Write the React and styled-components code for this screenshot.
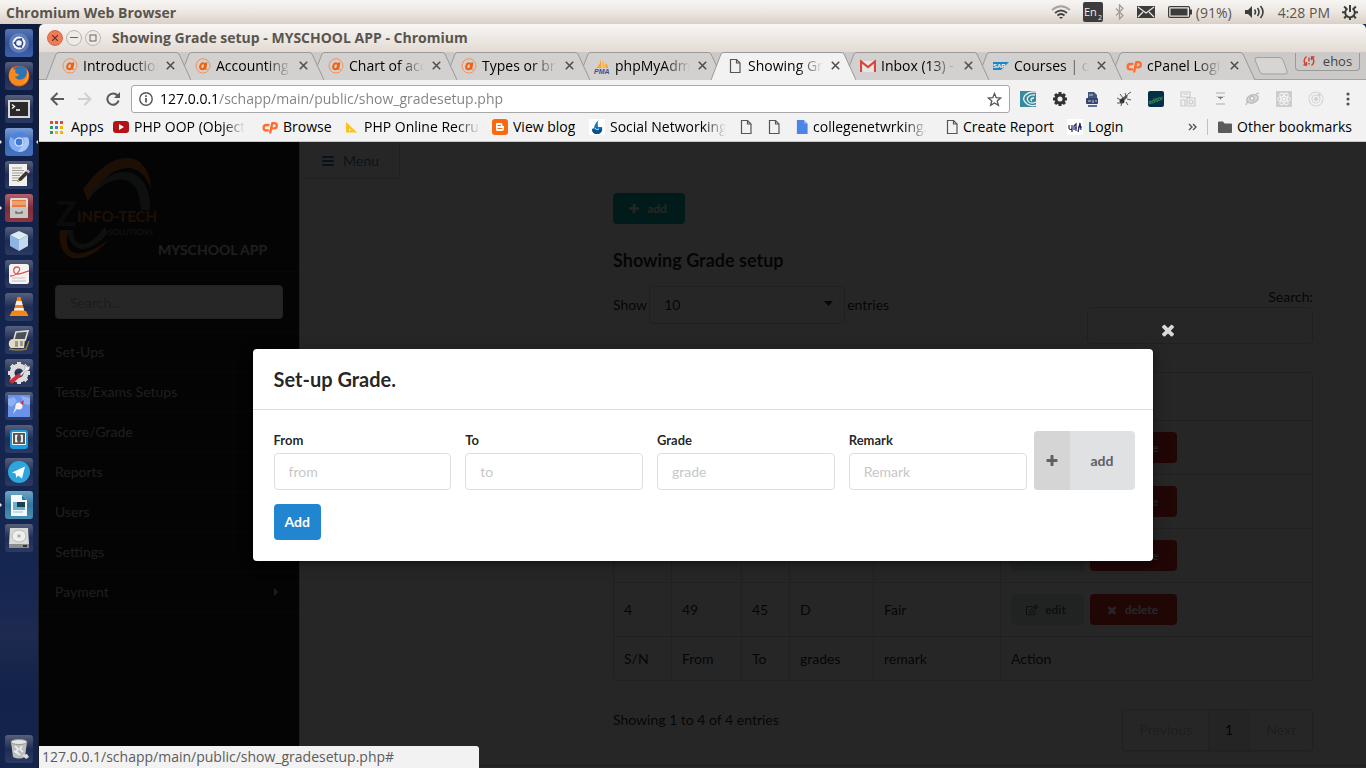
import React from "react";
import styled, { createGlobalStyle, css } from "styled-components";
import { FaRegEdit } from "react-icons/fa";

const UI = `"Open Sans", "Noto Sans", sans-serif`;
const PAGE = `Lato, "Liberation Sans", sans-serif`;

const GlobalStyle = createGlobalStyle`
  *, *::before, *::after { box-sizing: border-box; }
  body { margin: 0; font-family: ${UI}; font-size: 14px; background: #14234a; }
  button, input, select { font: inherit; color: inherit; margin: 0; }
  button { border: 0; padding: 0; background: none; cursor: pointer; }
  a { color: inherit; text-decoration: none; }
  svg { display: block; flex: none; }
`;

/* ---------- desktop shell ---------- */

const Desktop = styled.div`
  display: flex;
  flex-direction: column;
  min-height: 100vh;
`;

const Panel = styled.header`
  display: flex;
  align-items: center;
  justify-content: space-between;
  height: 24px;
  padding: 0 8px 0 6px;
  color: #5a554e;
  background: linear-gradient(#f7f5f3, #ece7e2 50%, #d9cfc6);
`;

const PanelTitle = styled.span`
  font-weight: 700;
`;

const Indicators = styled.div`
  display: flex;
  align-items: center;
  gap: 12px;
`;

const Indicator = styled.button`
  display: flex;
  align-items: center;
  gap: 3px;
`;

const Workspace = styled.div`
  display: flex;
  flex: 1;
`;

const Launcher = styled.nav`
  display: flex;
  flex-direction: column;
  gap: 5px;
  width: 39px;
  flex: none;
  padding: 5px 0;
  background: linear-gradient(#0d1b40, #13234c 30%, #152650 75%, #1e2a50 82%, #12224a 90%, #14244c);
  border-right: 1px solid #1a1c26;
`;

const tileTint = {
  plain: "linear-gradient(#56607c, #1f2d55 50%, #2b3a62)",
  blue: "linear-gradient(#5577b5, #2f4f96 50%, #3f62a8)",
  sky: "linear-gradient(#7b9cd6, #3c68b4 50%, #4472bf)",
  red: "linear-gradient(#b4606c, #7e2c3a 50%, #8c3644)",
  teal: "linear-gradient(#6fa6c4, #33779f 50%, #4a8fb2)",
};

const Tile = styled.button`
  position: relative;
  width: 28px;
  height: 28px;
  margin-left: 5px;
  margin-top: ${(p) => (p.$last ? "auto" : "0")};
  border-radius: 3px;
  background: ${(p) => tileTint[p.$tint || "plain"]};
  ${(p) =>
    p.$running &&
    css`
      &::before {
        content: "";
        position: absolute;
        left: -5px;
        top: 12px;
        border: 2px solid transparent;
        border-left-color: #e8e8ee;
      }
    `}
  ${(p) =>
    p.$focused &&
    css`
      &::after {
        content: "";
        position: absolute;
        right: -5px;
        top: 12px;
        border: 2px solid transparent;
        border-right-color: #e8e8ee;
      }
    `}
`;

const Window = styled.section`
  display: flex;
  flex-direction: column;
  flex: 1;
  min-width: 0;
`;

const TitleBar = styled.div`
  display: flex;
  align-items: center;
  gap: 3px;
  height: 28px;
  padding: 0 8px;
  border-radius: 5px 5px 0 0;
  background: linear-gradient(#f8f6f4, #e3dbd4);
  color: #5a554e;
`;

const WindowButton = styled.button`
  display: grid;
  place-items: center;
  width: 16px;
  height: 16px;
  border-radius: 50%;
  border: 1px solid ${(p) => (p.$close ? "#d8694a" : "#bdb5ad")};
  background: ${(p) => (p.$close ? "#ee7a58" : "#eeeae6")};
`;

const WindowTitle = styled.h1`
  margin: 0 0 0 8px;
  font-size: 14px;
  line-height: 20px;
  font-weight: 700;
`;

/* ---------- browser chrome ---------- */

const TabStrip = styled.div`
  display: flex;
  align-items: center;
  height: 28px;
  padding-left: 6px;
  background: #cbcac9;
  border-bottom: 1px solid #a2a2a2;
`;

const TabBox = styled.div`
  position: relative;
  display: flex;
  align-items: center;
  width: 146px;
  height: 28px;
  padding: 0 14px 0 17px;
  margin-right: -13px;
  z-index: ${(p) => p.$level};
`;

const TabShape = styled.svg`
  position: absolute;
  inset: 0;
  z-index: -1;
`;

const TabLink = styled.a`
  display: flex;
  align-items: center;
  gap: 5px;
  flex: 1;
  min-width: 0;
  color: #000;
`;

const Faded = styled.span`
  flex: 1;
  overflow: hidden;
  white-space: nowrap;
  mask-image: linear-gradient(90deg, #000 65%, transparent);
`;

const TabClose = styled.button`
  display: grid;
  place-items: center;
  width: 14px;
  height: 14px;
  margin-left: 5px;
`;

const Profile = styled.button`
  display: flex;
  align-items: center;
  justify-content: center;
  gap: 8px;
  width: 65px;
  height: 18px;
  margin: 0 6px 8px auto;
  border: 1px solid #9a9a9a;
  border-top: 0;
  border-radius: 0 0 4px 4px;
  font-size: 13px;
  color: #444;
`;

const NewTab = styled.button`
  margin-left: 12px;
`;

const Toolbar = styled.div`
  display: flex;
  align-items: center;
  height: 38px;
  padding: 0 10px 0 11px;
  background: #f2f2f2;
`;

const NavButton = styled.button`
  display: grid;
  place-items: center;
  width: 14px;
  height: 16px;
  margin-right: 14px;
`;

const Omnibox = styled.form`
  display: flex;
  align-items: center;
  flex: 1;
  gap: 7px;
  height: 28px;
  margin: 0 10px 0 -3px;
  padding: 0 7px;
  border: 1px solid #a8a8a8;
  border-radius: 3px;
  background: #fff;
`;

const Address = styled.input`
  flex: 1;
  min-width: 0;
  border: 0;
  padding: 0;
  outline: 0;
  line-height: 20px;
  color: transparent;
  background: linear-gradient(90deg, #000 58px, #808080 58px);
  background-clip: text;
  -webkit-background-clip: text;
`;

const Extensions = styled.div`
  display: flex;
  gap: 16px;
`;

const BookmarkBar = styled.nav`
  display: flex;
  align-items: center;
  height: 24px;
  padding: 0 14px 6px 11px;
  background: #f2f2f2;
  border-bottom: 1px solid #c8c8c8;
  color: #000;
`;

const BookmarkLink = styled.a`
  display: flex;
  align-items: center;
  gap: 5px;
  width: ${(p) => (p.$w ? `${p.$w}px` : "auto")};
  white-space: nowrap;
`;

const BookmarkText = styled.span`
  overflow: hidden;
  max-width: 116px;
  ${(p) => p.$fade && "mask-image: linear-gradient(90deg, #000 80%, transparent);"}
`;

const BarEnd = styled.div`
  display: flex;
  align-items: center;
  gap: 10px;
  margin-left: auto;
`;

const Separator = styled.span`
  width: 1px;
  height: 16px;
  background: #c0c0c0;
`;

/* ---------- web page ---------- */

const Viewport = styled.div`
  position: relative;
  display: flex;
  flex: 1;
  background: #fff;
  font-family: ${PAGE};
  line-height: 20px;
  color: rgba(0, 0, 0, 0.87);
`;

const Sidebar = styled.aside`
  width: 260px;
  flex: none;
  background: #1b1c1d;
  color: rgba(255, 255, 255, 0.75);
`;

const Brand = styled.a`
  display: flex;
  align-items: flex-end;
  height: 130px;
  padding: 0 16px 11px 17px;
  font-weight: 700;
  border-bottom: 1px solid #2d2e2f;
`;

const BrandName = styled.span`
  margin-left: 2px;
`;

const SearchItem = styled.div`
  padding: 13px 16px 12px;
  border-bottom: 1px solid #2d2e2f;
`;

const SidebarSearch = styled.input`
  display: block;
  width: 100%;
  height: 34px;
  padding: 0 14px;
  border: 1px solid #e0e0e0;
  border-radius: 4px;
  background: #fff;
  &::placeholder { color: #bbb; }
`;

const SideLink = styled.a`
  display: flex;
  align-items: center;
  justify-content: space-between;
  height: 40px;
  padding: 0 20px 0 16px;
  border-bottom: 1px solid #2d2e2f;
`;

const Main = styled.main`
  flex: 1;
  min-width: 0;
  border-left: 1px solid #d4d4d5;
`;

const MenuButton = styled.button`
  display: flex;
  align-items: center;
  gap: 9px;
  width: 100px;
  height: 37px;
  padding: 2px 0 0 22px;
  border: 1px solid #d4d4d5;
  border-radius: 0 0 4px 4px;
  border-width: 0 1px 1px 0;
  color: #4183c4;
`;

const Content = styled.div`
  max-width: 700px;
  margin: 14px 53px 14px auto;
`;

const SmallButton = styled.button`
  display: inline-flex;
  align-items: center;
  justify-content: center;
  gap: 7px;
  width: ${(p) => p.$w}px;
  height: 31px;
  padding-right: 3px;
  border-radius: 4px;
  font-size: 12px;
  font-weight: 700;
  vertical-align: top;
  color: ${(p) => p.$fg || "#fff"};
  background: ${(p) => p.$bg};
  & + & { margin-left: 6px; }
`;

const Heading = styled.h2`
  margin: 24px 0 14px;
  font-size: 18px;
  line-height: 24px;
  font-weight: 700;
`;

const TableTools = styled.div`
  display: flex;
  justify-content: space-between;
  align-items: flex-start;
  margin-bottom: 28px;
`;

const LengthLabel = styled.label`
  display: flex;
  align-items: center;
  gap: 2px;
`;

const SelectWrap = styled.span`
  position: relative;
  display: block;
`;

const Select = styled.select`
  appearance: none;
  width: 196px;
  height: 38px;
  padding: 0 14px;
  border: 1px solid #d4d4d5;
  border-radius: 4px;
  background: #fff;
`;

const SelectCaret = styled.svg`
  position: absolute;
  right: 12px;
  top: 15px;
`;

const SearchLabel = styled.label`
  display: flex;
  flex-direction: column;
  align-items: flex-end;
  padding-top: 1px;
`;

const TableSearch = styled.input`
  width: 226px;
  height: 37px;
  padding: 0 14px;
  border: 1px solid #d4d4d5;
  border-radius: 4px;
  background: #fff;
`;

const Grid = styled.table`
  width: 100%;
  table-layout: fixed;
  border: 1px solid #d4d4d5;
  border-radius: 4px;
  border-spacing: 0;
  th, td { padding: 0 10px; text-align: left; font-weight: 400; }
  th + th, td + td { border-left: 1px solid #dededf; }
  thead tr { height: 47px; }
  thead th { background: #fafafa; font-weight: 700; }
  tbody tr { height: 54px; }
  tfoot tr { height: 44px; }
  tbody td, tfoot td { border-top: 1px solid #d4d4d5; }
`;

const TableFoot = styled.div`
  display: flex;
  justify-content: space-between;
  align-items: flex-start;
  margin-top: 28px;
`;

const Info = styled.p`
  margin: 1px 0 0;
`;

const Pager = styled.nav`
  display: flex;
  height: 42px;
  border: 1px solid #d4d4d5;
  border-radius: 4px;
  box-shadow: 0 1px 2px rgba(34, 36, 38, 0.15);
`;

const PageLink = styled.a`
  display: flex;
  align-items: center;
  padding: 0 16px;
  background: ${(p) => (p.$current ? "#f2f2f2" : "transparent")};
  color: ${(p) => (p.$current ? "rgba(0,0,0,.95)" : "rgba(40,40,40,.3)")};
  & + & { border-left: 1px solid #dededf; }
`;

const PageEnd = styled.div`
  height: 3px;
  border-top: 1px solid #c4c4c5;
`;

const Dimmer = styled.div`
  position: absolute;
  inset: 0;
  display: flex;
  align-items: center;
  justify-content: center;
  background: rgba(0, 0, 0, 0.85);
`;

const Modal = styled.section`
  position: relative;
  width: 900px;
  max-width: 90%;
  border-radius: 4px;
  background: #fff;
  box-shadow: 1px 3px 3px rgba(0, 0, 0, 0.2), 1px 3px 15px 2px rgba(0, 0, 0, 0.2);
`;

const CloseButton = styled.button`
  position: absolute;
  top: -28px;
  right: -24px;
  color: #d9d9d9;
`;

const ModalTitle = styled.h2`
  margin: 0;
  padding: 18px 21px;
  font-size: 20px;
  line-height: 24px;
  font-weight: 700;
  border-bottom: 1px solid #dededf;
`;

const ModalForm = styled.form`
  padding: 21px 18px 21px 21px;
`;

const FieldRow = styled.div`
  display: flex;
  align-items: stretch;
  gap: 7px;
  margin-bottom: 14px;
`;

const Fields = styled.div`
  display: grid;
  grid-template-columns: repeat(4, 1fr);
  gap: 14px;
  flex: 1;
`;

const Field = styled.label`
  display: block;
  font-size: 13px;
  line-height: 18px;
  font-weight: 700;
`;

const FieldInput = styled.input`
  display: block;
  width: 100%;
  height: 37px;
  margin-top: 4px;
  padding: 0 14px;
  border: 1px solid #dededf;
  border-radius: 4px;
  font-size: 14px;
  font-weight: 400;
  background: #fff;
  &::placeholder { color: #c7c7c7; opacity: 1; }
`;

const LabeledButton = styled.button`
  display: flex;
  width: 101px;
  border-radius: 4px;
  overflow: hidden;
  font-weight: 700;
  color: #5f6062;
  background: #e0e1e2;
`;

const ButtonIcon = styled.span`
  display: grid;
  place-items: center;
  align-self: stretch;
  width: 36px;
  background: #d5d5d5;
`;

const ButtonText = styled.span`
  flex: 1;
  align-self: center;
`;

const PrimaryButton = styled.button`
  display: block;
  height: 36px;
  padding: 0 11px;
  border-radius: 4px;
  font-weight: 700;
  color: #fff;
  background: #2185d0;
`;

const StatusBubble = styled.div`
  position: absolute;
  left: 0;
  bottom: 0;
  width: 440px;
  height: 22px;
  padding-left: 3px;
  border-top-right-radius: 3px;
  font-family: ${UI};
  line-height: 22px;
  color: #5c5c5c;
  background: #f2f2f2;
`;

/* ---------- glyphs ---------- */

const Plus = ({ size = 14 }) => (
  <svg width={size} height={size} viewBox="0 0 1792 1792" fill="currentColor">
    <path d="M1600 736v192q0 40-28 68t-68 28h-416v416q0 40-28 68t-68 28h-192q-40 0-68-28t-28-68v-416h-416q-40 0-68-28t-28-68v-192q0-40 28-68t68-28h416v-416q0-40 28-68t68-28h192q40 0 68 28t28 68v416h416q40 0 68 28t28 68z" />
  </svg>
);

const Times = ({ size = 14 }) => (
  <svg width={size} height={size} viewBox="0 0 1792 1792" fill="currentColor">
    <path d="M1490 1322q0 40-28 68l-136 136q-28 28-68 28t-68-28l-294-294-294 294q-28 28-68 28t-68-28l-136-136q-28-28-28-68t28-68l294-294-294-294q-28-28-28-68t28-68l136-136q28-28 68-28t68 28l294 294 294-294q28-28 68-28t68 28l136 136q28 28 28 68t-28 68l-294 294 294 294q28 28 28 68z" />
  </svg>
);

const Bars = () => (
  <svg width="12" height="12" viewBox="0 0 12 12" fill="currentColor">
    <rect y="1" width="12" height="2" rx="1" />
    <rect y="5" width="12" height="2" rx="1" />
    <rect y="9" width="12" height="2" rx="1" />
  </svg>
);

const CaretRight = () => (
  <svg width="5" height="8" viewBox="0 0 5 8" fill="currentColor"><path d="M0 0l4 4-4 4z" /></svg>
);

const Svg16 = ({ children, w = 16 }) => (
  <svg width={w} height="16" viewBox={`0 0 ${w} 16`}>{children}</svg>
);

const AtIcon = () => (
  <Svg16>
    <path d="M13.6 12.2A7 7.2 0 1 1 15 7.6c0 2.600-1.200 4-2.800 4-1.200 0-1.900-.7-1.700-1.900L11.300 4.600" fill="none" stroke="#f3915a" strokeWidth="1" />
    <ellipse cx="7.600" cy="8.200" rx="2.300" ry="3" transform="rotate(18 7.600 8.200)" fill="none" stroke="#f2600c" strokeWidth="2" />
    <path d="M11.400 4.500l-1.300 7" stroke="#f2600c" strokeWidth="2" />
  </Svg16>
);

const PmaIcon = () => (
  <Svg16>
    <path d="M7 1v9H2.500C4.500 8 6.500 5 7 1z" fill="#f7a331" />
    <path d="M8 2c2 2 3 5 3 8H8z" fill="#f9b95c" />
    <path d="M11.500 5c2 1.500 2.500 3.500 2.500 5h-2.500z" fill="#f7a331" />
    <text x="0" y="16" fontSize="7" fontWeight="700" fontStyle="italic" fontFamily="Liberation Sans, sans-serif" fill="#4b4b80">PMA</text>
  </Svg16>
);

const PageIcon = ({ fill = "none", stroke = "#555", w = 12 }) => (
  <Svg16 w={w}>
    <g transform={`translate(${(w - 12) / 2} 0)`}>
      <path d="M1.500 1.500h6l3.500 3.500v9.500h-9.500z" fill={fill} stroke={stroke} strokeWidth="1.200" />
      <path d="M7.500 1.500V5H11" fill={fill === "none" ? "none" : "#a9c5f5"} stroke={stroke} strokeWidth="1.200" />
    </g>
  </Svg16>
);

const GmailIcon = () => (
  <Svg16>
    <rect x="1" y="3" width="14" height="11" rx="1" fill="#e6e6e6" />
    <path d="M1 14V3.500L8 9l7-5.500V14" fill="none" stroke="#d9463a" strokeWidth="2.200" />
  </Svg16>
);

const SapIcon = () => (
  <Svg16>
    <path d="M0 4h16l-8 8H0z" fill="#1c86c8" />
    <text x="0" y="10" fontSize="6" fontWeight="700" fontFamily="Liberation Sans, sans-serif" fill="#fff">SAP</text>
  </Svg16>
);

const CpIcon = () => (
  <Svg16>
    <path d="M6.500 6H4.300a2.700 2.700 0 0 0 0 5.400H6" fill="none" stroke="#ff6c2c" strokeWidth="2.300" strokeLinecap="round" />
    <path d="M8.200 13.500L10.200 4.200h2a2.600 2.600 0 0 1 0 5.200H10.800" fill="none" stroke="#ff6c2c" strokeWidth="2.300" strokeLinecap="round" strokeLinejoin="round" />
  </Svg16>
);

const AppsIcon = () => (
  <Svg16>
    {["#e94335", "#e94335", "#e94335", "#2f9e5b", "#3b7ded", "#f5b400", "#2f9e5b", "#f5b400", "#f5b400"].map((c, i) => (
      <rect key={i} x={(i % 3) * 5} y={2 + Math.floor(i / 3) * 5} width="3" height="3" fill={c} />
    ))}
  </Svg16>
);

const YoutubeIcon = () => (
  <Svg16><rect y="2" width="16" height="12" rx="3" fill="#b31217" /><path d="M6 5v6l5-3z" fill="#fff" /></Svg16>
);

const RulerIcon = () => (
  <Svg16 w={14}><path d="M1 3l11 10.500H1z" fill="#fbc21b" /><path d="M4 9l2.500 2.500H4z" fill="#f2f2f2" /></Svg16>
);

const BloggerIcon = () => (
  <Svg16>
    <rect width="16" height="16" rx="3" fill="#f96a0c" />
    <path d="M5 4h3.500A2 2 0 0 1 10.500 6v1H12v2.500A2.500 2.500 0 0 1 9.500 12h-4A1.500 1.500 0 0 1 4 10.500V5A1 1 0 0 1 5 4z" fill="#fff" />
    <path d="M6 6.500h2.500M6 9.500h4" stroke="#f96a0c" strokeWidth="1.200" strokeLinecap="round" />
  </Svg16>
);

const SocialIcon = () => (
  <Svg16>
    <rect width="16" height="16" fill="#fff" />
    <path d="M10 1C8 3 9 5 9 8l4 0c1 4-1 7-5 7-3 0-5-2-5-5l2-1C6 5 7 3 10 1z" fill="#1478bd" />
    <path d="M3 10c3 1 6 1 10-1 0 4-2 6-5 6-3 0-5-2-5-5z" fill="#0f4d8c" />
    <path d="M6 9c1 2 2 2 4 1" fill="none" stroke="#fff" strokeWidth=".8" />
  </Svg16>
);

const LoginIcon = () => (
  <Svg16>
    <rect width="16" height="16" fill="#fff" />
    <path d="M2 6v3c0 2 3 2 3 0V6M5 9v4M7 11V7l2-2v7M8 9h2M11 13l2-9 1 7M11 8h4" fill="none" stroke="#22265e" strokeWidth="1.200" />
  </Svg16>
);

const FolderIcon = () => (
  <svg width="14" height="12" viewBox="0 0 14 12" fill="#5a5a5a"><path d="M0 1.500Q0 .5 1 .5h4l1.500 2H13q1 0 1 1V11q0 1-1 1H1q-1 0-1-1z" /></svg>
);

const CrossIcon = () => (
  <svg width="9" height="9" viewBox="0 0 9 9" stroke="#505050" strokeWidth="1.600"><path d="M.8.8l7.400 7.400M8.200.8L.8 8.200" /></svg>
);

const gearTeeth = [0, 45, 90, 135, 180, 225, 270, 315];

const extensionIcons = [
  ["Swirl", <><rect width="16" height="16" fill="#3a8a9c" /><path d="M16 1C7 0 1 6 5 11c3 4 8 4 11 3M15 4C9 3 6 7 8 10c2 3 6 2 8 1M14 7c-3 0-4 2-2 3" fill="none" stroke="#e6f3f5" strokeWidth="1.300" /></>],
  ["Settings", <>{gearTeeth.map((a) => <rect key={a} x="6.500" y="1" width="3" height="3" fill="#333" transform={`rotate(${a} 8 8)`} />)}<circle cx="8" cy="8" r="4" fill="none" stroke="#333" strokeWidth="3" /></>],
  ["Page tools", <><path d="M4 1h6l3 3v4H4z" fill="#44557c" /><rect x="2" y="7" width="12" height="6" rx="1" fill="#33456e" /><path d="M4 14h9v2H4z" fill="#5d6c90" /><path d="M4 10h3M9 9v3M11 10h2M5 4h4" stroke="#c6cde0" /></>],
  ["Bug", <><path d="M6 7l6-4-1 4-5 4z" fill="#555" /><circle cx="6" cy="10" r="2.500" fill="#333" /><path d="M1 7l4 2M1 12h4M5 15l1-4M4 3l3 4M10 11l2 3M11 8l4 1M9 2l1 3M15 1l-3 2" stroke="#555" /></>],
  ["Editor", <><rect width="16" height="16" rx="2" fill="#06304a" /><text x="0" y="11" fontSize="6" fontStyle="italic" fontFamily="Liberation Sans, sans-serif" fill="#55c253" transform="rotate(-20 8 9)">editor</text></>],
  ["Snippets", <g fill="none" stroke="#cacaca" strokeWidth="1.200"><path d="M1 1h9v5H1zM7 7h8v8H7zM1 9h4v6H1zM3 3h5" /><circle cx="11" cy="11" r="2" /></g>],
  ["Layout", <g fill="#cfcfcf"><rect x="4" y="1" width="9" height="2" /><path d="M4 5h9v1H4z" /><path d="M6 6h5v1H9.500L8.500 9 7.500 7H6z" fill="#777" /><rect x="4" y="12" width="9" height="2" /></g>],
  ["Inspector", <g fill="none" stroke="#b8b8b8" strokeWidth="1.200"><ellipse cx="8.500" cy="8" rx="6" ry="4" transform="rotate(-20 8 8)" fill="#d6d6d6" /><circle cx="8" cy="7.500" r="2" fill="#efefef" /><path d="M4 10l-2 4M12 3l3-1" /></g>],
  ["React", <><rect width="16" height="16" fill="#cdcdcd" /><g fill="none" stroke="#f4f4f4"><ellipse cx="8" cy="8" rx="6.500" ry="2.600" /><ellipse cx="8" cy="8" rx="6.500" ry="2.600" transform="rotate(60 8 8)" /><ellipse cx="8" cy="8" rx="6.500" ry="2.600" transform="rotate(120 8 8)" /></g><circle cx="8" cy="8" r="1.300" fill="#fff" /></>],
  ["Orbit", <g fill="none" stroke="#d4d4d4" strokeWidth="1.100"><circle cx="8" cy="8" r="7" /><circle cx="8" cy="8" r="4" /><circle cx="8" cy="8" r="1.500" fill="#cfcfcf" /><circle cx="11" cy="4" r="1" fill="#bbb" /></g>],
];

const launcherItems = [
  { name: "Search", tint: "blue", art: <><circle cx="14" cy="14" r="10" fill="#7d97c9" opacity=".55" /><circle cx="14" cy="14" r="6.500" fill="#f4f6fa" /><circle cx="14" cy="14" r="3.600" fill="none" stroke="#2d4d8e" strokeWidth="1.600" /><g fill="#2d4d8e"><circle cx="9.600" cy="14" r="1.100" /><circle cx="16.200" cy="10.200" r="1.100" /><circle cx="16.200" cy="17.800" r="1.100" /></g></> },
  { name: "Firefox", art: <><circle cx="14" cy="14" r="10.500" fill="#e2541a" /><circle cx="15" cy="11" r="7" fill="#2a74b8" /><path d="M4 12C5 8 6 6 8 5c0 2 1 3 3 3-2 2 0 4 3 4-1 3-3 3-4 2 1 5 8 5 11 0 2-4 1-6 0-8 5 6 3 14-4 17C9 25 3 19 4 12z" fill="#f58a1f" /><path d="M22 8c3 6 0 13-6 14 5-2 8-6 6-14z" fill="#fdd13a" /></> },
  { name: "Terminal", art: <><rect x="3" y="5" width="22" height="18" fill="#d8d8d6" /><rect x="5" y="7" width="18" height="14" fill="#2a2a2a" /><path d="M7 9.500l2.500 2L7 13.500M11 15h4" fill="none" stroke="#fff" strokeWidth="1.300" /></> },
  { name: "Chromium", tint: "sky", running: true, focused: true, art: <><circle cx="14" cy="14" r="10" fill="#82aaf0" /><path d="M14 4a10 10 0 0 1 9 5.500H14a4.500 4.500 0 0 0-4 2.500L5.500 8.700A10 10 0 0 1 14 4z" fill="#4d83dc" /><path d="M23 9.500A10 10 0 0 1 13 24l4.500-7a4.500 4.500 0 0 0 0-7.500z" fill="#a9c6f7" /><circle cx="14" cy="14" r="4.500" fill="#e7effc" /><circle cx="14" cy="14" r="3.400" fill="#3f79d8" /></> },
  { name: "Text Editor", art: <><rect x="4" y="3" width="18" height="22" fill="#f1f1ee" /><path d="M7 7h10M7 9.500h12M7 12h11M7 14.500h8M7 17h7M7 19.500h6" stroke="#9a9a98" /><path d="M12 21l2-4 7-7 2.500 2.500-7 7z" fill="#3a3733" /><path d="M21 10l2-1.500 2 2-1.500 2z" fill="#e9a3cf" /><path d="M12 21l1.200-2.500 1.500 1.500z" fill="#e4c765" /></> },
  { name: "Files", tint: "red", running: true, art: <><rect x="5" y="4" width="18" height="20" rx="1.500" fill="#dad8d4" /><rect x="7" y="6" width="14" height="7" fill="#e67a3e" /><path d="M7 8h14M7 10h14" stroke="#f7c59a" /><rect x="5" y="13" width="18" height="11" rx="1" fill="#c8c6c2" /><path d="M11 17v2h6v-2" fill="none" stroke="#6d6b68" strokeWidth="1.400" /></> },
  { name: "VirtualBox", art: <><path d="M14 4l9 4-9 5-9-5z" fill="#d9ecf2" /><path d="M5 8l9 5v11l-9-5z" fill="#8fb4e2" /><path d="M23 8l-9 5v11l9-5z" fill="#c2d8ee" /></> },
  { name: "PDF Viewer", art: <><rect x="4" y="4" width="20" height="20" rx="2.500" fill="#f4f3f1" /><path d="M5 16c8 0 13-9 7-9-4 0-5 7 1 7 4 0 6-2 11-3" fill="none" stroke="#e0565a" strokeWidth="1.300" /><path d="M7 18h13M7 21h14" stroke="#c6c4c2" strokeWidth="1.200" /></> },
  { name: "VLC", art: <><path d="M4.500 23l2.500-5h14l2.500 5z" fill="#f28a14" /><path d="M12.500 4h3L20 20q-6 2.500-12 0z" fill="#f0841a" /><path d="M11.500 8h5l1.200 4h-7.400zM9.700 15h8.700l.7 2.500H9z" fill="#f1efee" /></> },
  { name: "Scanner", art: <><path d="M9 13L11 6l12-1-3 10" fill="#4b4f58" stroke="#dedbd0" strokeWidth="1.600" /><path d="M4 16q1-3 4-3h12l-1 9H6q-3-2-2-6z" fill="#e2dcc4" /><path d="M4 23q9 2 17 0l3-8" fill="none" stroke="#9c7d35" strokeWidth="1.500" /><path d="M10 15h3v6h-3zM15 15h3v5h-3z" fill="#a09a84" /></> },
  { name: "System Settings", art: <><circle cx="14" cy="14" r="7" fill="none" stroke="#dcdcdc" strokeWidth="5" />{gearTeeth.map((a) => <rect key={a} x="12" y="3" width="4" height="4" fill="#dcdcdc" transform={`rotate(${a} 14 14)`} />)}<path d="M4 22l10-8 2 3-9 8z" fill="#cf2d33" /><path d="M15 15l5-5 0-4 2 2 3-1-1 4-4 1-4 5z" fill="#f3f3f3" stroke="#888" strokeWidth=".5" /></> },
  { name: "Maps", art: <><rect x="3" y="3" width="22" height="22" fill="#6a92e8" /><path d="M3 7l6-2 3 4-5 6-4-2zM16 4l9 2v7l-6-1z" fill="#8fb0f2" /><path d="M8 22l3-9 5-1z" fill="#dfe8fa" /><circle cx="14" cy="14" r="3.500" fill="#f5f3ee" /><path d="M15 11l4-3-1 5z" fill="#e2303a" /></> },
  { name: "Brackets", art: <><rect x="5" y="5" width="18" height="19" rx="3" fill="#1b9ae0" /><rect x="7" y="7" width="14" height="13" rx="1" fill="#f3f3f3" /><rect x="8" y="8" width="12" height="11" fill="#565656" /><path d="M12.500 10.500H11v6h1.500M15.500 10.500H17v6h-1.500" fill="none" stroke="#fff" strokeWidth="1.700" /></> },
  { name: "Telegram", art: <><circle cx="14" cy="14" r="11" fill="#2ea5dd" /><path d="M7 14.500L20 8.500 17 20.500l-4-3-1.500 2.500-1-4.500z" fill="#fff" /></> },
  { name: "Impress", tint: "teal", running: true, art: <><path d="M6 4h11l5 5v16H6z" fill="#f6f8f9" /><path d="M17 4l5 5h-5z" fill="#2b7ca3" /><rect x="8" y="11" width="12" height="8" fill="#65b0d3" /><rect x="12" y="11" width="8" height="5" fill="#1d3f4e" /><path d="M8 21h10" stroke="#8cc3dc" /></> },
  { name: "Disk", art: <><path d="M5 4h18l1 16H4z" fill="#d9d9d7" /><ellipse cx="14" cy="12" rx="7" ry="6" fill="#efefed" stroke="#b9b9b7" /><circle cx="14" cy="12" r="1.800" fill="#b3b3b1" /><rect x="4" y="20" width="20" height="4" fill="#8d8d8b" /><path d="M18 22h4" stroke="#333" strokeWidth="2" /></> },
  { name: "Trash", last: true, art: <><path d="M6 7h16l-2 15q-6 3-12 0z" fill="#bdbdbd" /><ellipse cx="14" cy="7" rx="8" ry="2.500" fill="#e4e4e4" stroke="#999" /><path d="M10 11l3 3-2 3 4 3M17 11l-2 3 3 3M9 16l3 2" stroke="#ededed" strokeWidth="1.700" fill="none" /><path d="M17 20l5-1 2 3-3 2z" fill="#dcdcdc" /></> },
];

/* ---------- data ---------- */

const tabs = [
  { title: "Introduction", icon: <AtIcon /> },
  { title: "Accounting", icon: <AtIcon /> },
  { title: "Chart of acc", icon: <AtIcon /> },
  { title: "Types or bra", icon: <AtIcon /> },
  { title: "phpMyAdm", icon: <PmaIcon /> },
  { title: "Showing Gr", icon: <PageIcon w={16} />, active: true },
  { title: "Inbox (13) -", icon: <GmailIcon /> },
  { title: "Courses | op", icon: <SapIcon /> },
  { title: "cPanel Logi", icon: <CpIcon /> },
];

const bookmarks = [
  { title: "Apps", icon: <AppsIcon />, w: 63 },
  { title: "PHP OOP (Object", icon: <YoutubeIcon />, w: 149, fade: true },
  { title: "Browse", icon: <CpIcon />, w: 83 },
  { title: "PHP Online Recrui", icon: <RulerIcon />, w: 147, fade: true },
  { title: "View blog", icon: <BloggerIcon />, w: 97 },
  { title: "Social Networking", icon: <SocialIcon />, w: 151, fade: true },
  { title: "", label: "Page", icon: <PageIcon />, w: 28 },
  { title: "", label: "Page", icon: <PageIcon />, w: 28 },
  { title: "collegenetwrking.", icon: <PageIcon fill="#4a86e8" stroke="#4a86e8" />, w: 150, fade: true },
  { title: "Create Report", icon: <PageIcon />, w: 121 },
  { title: "Login", icon: <LoginIcon />, w: 60 },
];

const sideLinks = [
  { title: "Set-Ups", caret: true },
  { title: "Tests/Exams Setups" },
  { title: "Score/Grade" },
  { title: "Reports" },
  { title: "Users" },
  { title: "Settings" },
  { title: "Payment", caret: true },
];

const columns = [
  { title: "S/N", w: 57 },
  { title: "From", w: 70 },
  { title: "To", w: 48 },
  { title: "grades", w: 84 },
  { title: "remark", w: 127 },
  { title: "Action" },
];

const grades = [
  ["1", "", "", "", ""],
  ["2", "", "", "", ""],
  ["3", "", "", "", ""],
  ["4", "49", "45", "D", "Fair"],
];

const formFields = [
  ["From", "from"],
  ["To", "to"],
  ["Grade", "grade"],
  ["Remark", "Remark"],
];

/* ---------- parts ---------- */

const Tab = ({ title, icon, active, level }) => (
  <TabBox $level={level}>
    <TabShape width="146" height="28" viewBox="0 0 146 28">
      <path d="M1 28L11 2Q12 .5 14 .5H131Q133 .5 134 2L146 28" fill={active ? "#f2f2f2" : "#d2d1d0"} stroke="#999" />
    </TabShape>
    <TabLink href="#">
      {icon}
      <Faded>{title}</Faded>
    </TabLink>
    <TabClose aria-label="Close tab"><CrossIcon /></TabClose>
  </TabBox>
);

const Logo = () => (
  <svg width="100" height="104" viewBox="0 0 100 104">
    <path d="M27 33C42 13 56 2 71 2c14 0 24 13 24 32C92 20 82 12 72 12 56 12 44 26 32 45z" fill="#c8641e" />
    <path d="M31 44C44 25 56 15 70 16c15 1 25 16 24 38h-9C84 38 80 26 69 24 56 21 44 30 31 44z" fill="#5f6d6d" />
    <path d="M4 74c-2 14 3 26 14 28 10 2 24-5 34-18C40 93 27 99 19 97 10 95 9 84 13 74z" fill="#c8641e" />
    <path d="M12 74c0 10 5 19 15 19 8 0 18-8 25-16l-3-6C42 80 34 88 27 88c-8 0-10-7-10-14z" fill="#5f6d6d" />
    <text x="0" y="70" fontSize="34" fontFamily="Lato, sans-serif" fill="#4a4a4c">Z</text>
    <text x="21" y="66" fontSize="15" fontFamily="Lato, sans-serif" fill="#c8641e">INFO-TECH</text>
    <text x="52" y="79" fontSize="8" fontFamily="Lato, sans-serif" fill="#707475">SOLUTIONS</text>
  </svg>
);

const TopPanel = () => (
  <Panel>
    <PanelTitle>Chromium Web Browser</PanelTitle>
    <Indicators>
      <Indicator aria-label="Wi-Fi">
        <svg width="20" height="14" viewBox="0 0 20 14" fill="none" strokeWidth="1.800"><path d="M1 5Q10-2.500 19 5" stroke="#a8a29b" /><path d="M4 8q6-5 12 0" stroke="#4a4a48" /><path d="M6.500 10.500q3.500-3 7 0" stroke="#3c3c3c" /><path d="M8 12l2 2 2-2z" fill="#3c3c3c" /></svg>
      </Indicator>
      <Indicator aria-label="Keyboard layout">
        <svg width="20" height="20" viewBox="0 0 20 20"><rect width="20" height="20" rx="2" fill="#3c3c3c" /><text x="1" y="14" fontSize="11" fontFamily="Open Sans, sans-serif" fill="#f2efec">En</text><text x="15" y="18" fontSize="7" fontFamily="Open Sans, sans-serif" fill="#f2efec">2</text></svg>
      </Indicator>
      <Indicator aria-label="Bluetooth">
        <svg width="9" height="16" viewBox="0 0 9 16" fill="none" stroke="#a29c95" strokeWidth="1.300"><path d="M1 4.500l7 7L4.500 15V1L8 4.500l-7 7" /></svg>
      </Indicator>
      <Indicator aria-label="Messages">
        <svg width="20" height="12" viewBox="0 0 20 12"><rect x="1" width="18" height="12" fill="#3c3c3c" /><path d="M2 1l8 6 8-6M2 11l5-5M18 11l-5-5" fill="none" stroke="#ece8e4" strokeWidth="1.200" /></svg>
      </Indicator>
      <Indicator>
        <svg width="25" height="12" viewBox="0 0 25 12"><rect x=".6" y=".6" width="21" height="10.800" rx="1.500" fill="none" stroke="#3c3c3c" strokeWidth="1.200" /><rect x="2.500" y="2.500" width="17" height="7" fill="#3c3c3c" /><rect x="22" y="3.500" width="2" height="5" fill="#3c3c3c" /></svg>
        (91%)
      </Indicator>
      <Indicator aria-label="Volume">
        <svg width="22" height="14" viewBox="0 0 22 14"><path d="M1 5h3l4-4v12L4 9H1z" fill="#3c3c3c" /><path d="M10.500 4.500q2 2.500 0 5M13.500 3q3 4 0 8M16.500 1q5 6 0 12" fill="none" stroke="#3c3c3c" strokeWidth="1.600" /></svg>
      </Indicator>
      <Indicator>4:28 PM</Indicator>
      <Indicator aria-label="System">
        <svg width="16" height="16" viewBox="0 0 16 16"><path d="M5.500 4.500a4.800 4.800 0 1 0 5 0" fill="none" stroke="#3c3c3c" strokeWidth="2" />{[45, 90, 135, 180, 225, 270, 315].map((a) => <rect key={a} x="7" y="0" width="2" height="3.500" fill="#3c3c3c" transform={`rotate(${a} 8 8.300)`} />)}<rect x="7" y="1" width="2" height="7" fill="#3c3c3c" /></svg>
      </Indicator>
    </Indicators>
  </Panel>
);

const BrowserChrome = () => (
  <>
    <TitleBar>
      <WindowButton $close aria-label="Close"><svg width="6" height="6" viewBox="0 0 6 6" stroke="#5e3326" strokeWidth="1.200"><path d="M0 0l6 6M6 0L0 6" /></svg></WindowButton>
      <WindowButton aria-label="Minimize"><svg width="8" height="2" viewBox="0 0 8 2"><rect width="8" height="1" fill="#6b655e" /></svg></WindowButton>
      <WindowButton aria-label="Maximize"><svg width="8" height="8" viewBox="0 0 8 8"><rect x="1" y="1" width="6" height="6" fill="none" stroke="#6b655e" /></svg></WindowButton>
      <WindowTitle>Showing Grade setup - MYSCHOOL APP - Chromium</WindowTitle>
    </TitleBar>
    <TabStrip>
      {tabs.map((t, i) => <Tab key={t.title} {...t} level={t.active ? tabs.length + 1 : tabs.length - i} />)}
      <NewTab aria-label="New tab">
        <svg width="34" height="18" viewBox="0 0 34 18"><path d="M1 3Q0 .5 3 .5H26Q28 .5 29 3l4 11q1 3-2 3H9Q7 17 6 15z" fill="#d6d5d4" stroke="#a0a0a0" /></svg>
      </NewTab>
      <Profile>
        <svg width="12" height="12" viewBox="0 0 12 12" fill="none" stroke="#d23f31" strokeWidth="1.400"><path d="M3.500 1.500C.5 4 .5 7 3 10M.5 10H3.500V7M8.500 10.500C11.500 8 11.500 5 9 2M11.500 2H8.500V5M6 2.500v4M6 8v1.500" /></svg>
        ehos
      </Profile>
    </TabStrip>
    <Toolbar>
      <NavButton aria-label="Back"><svg width="14" height="14" viewBox="0 0 14 14" fill="none" stroke="#5a5a5a" strokeWidth="2"><path d="M14 7H1.500M7.500 1l-6 6 6 6" /></svg></NavButton>
      <NavButton aria-label="Forward"><svg width="14" height="14" viewBox="0 0 14 14" fill="none" stroke="#d0d0d0" strokeWidth="2"><path d="M0 7h12.500M6.500 1l6 6-6 6" /></svg></NavButton>
      <NavButton aria-label="Reload"><svg width="14" height="14" viewBox="0 0 14 14"><path d="M11.500 3.500A5.700 5.700 0 1 0 12.600 8.500" fill="none" stroke="#5a5a5a" strokeWidth="2" /><path d="M14 0v6H8z" fill="#5a5a5a" /></svg></NavButton>
      <Omnibox>
        <svg width="14" height="14" viewBox="0 0 14 14"><circle cx="7" cy="7" r="6.200" fill="none" stroke="#555" strokeWidth="1.400" /><path d="M7 6v4.500M7 3.200V5" stroke="#555" strokeWidth="1.700" /></svg>
        <Address aria-label="Address" defaultValue="127.0.0.1/schapp/main/public/show_gradesetup.php" />
        <svg width="15" height="15" viewBox="0 0 15 15" fill="none" stroke="#555" strokeWidth="1.300"><path d="M7.500 1.500l1.700 4.200 4.500.3-3.500 2.900 1.200 4.400-3.900-2.400-3.900 2.400 1.200-4.400L1.300 6l4.500-.3z" /></svg>
      </Omnibox>
      <Extensions>
        {extensionIcons.map(([name, art]) => (
          <button key={name} aria-label={name}><Svg16>{art}</Svg16></button>
        ))}
        <button aria-label="Browser menu"><Svg16><g fill="#555"><circle cx="8" cy="3" r="1.600" /><circle cx="8" cy="8" r="1.600" /><circle cx="8" cy="13" r="1.600" /></g></Svg16></button>
      </Extensions>
    </Toolbar>
    <BookmarkBar>
      {bookmarks.map((b, i) => (
        <BookmarkLink key={i} href="#" $w={b.w} aria-label={b.label}>
          {b.icon}
          {b.title && <BookmarkText $fade={b.fade}>{b.title}</BookmarkText>}
        </BookmarkLink>
      ))}
      <BarEnd>
        <button aria-label="More bookmarks"><svg width="9" height="8" viewBox="0 0 9 8" fill="none" stroke="#555" strokeWidth="1.400"><path d="M1 1l3 3-3 3M5 1l3 3-3 3" /></svg></button>
        <Separator />
        <BookmarkLink href="#"><FolderIcon />Other bookmarks</BookmarkLink>
      </BarEnd>
    </BookmarkBar>
  </>
);

const GradeTable = () => (
  <Grid>
    <colgroup>{columns.map((c) => <col key={c.title} width={c.w} />)}</colgroup>
    <thead><tr>{columns.map((c) => <th key={c.title}>{c.title}</th>)}</tr></thead>
    <tbody>
      {grades.map((row) => (
        <tr key={row[0]}>
          {row.map((cell, i) => <td key={i}>{cell}</td>)}
          <td>
            <SmallButton $w={73} $bg="#dfe8e6" $fg="#606462"><FaRegEdit size={12} />edit</SmallButton>
            <SmallButton $w={87} $bg="#db2828"><Times size={12} />delete</SmallButton>
          </td>
        </tr>
      ))}
    </tbody>
    <tfoot><tr>{columns.map((c) => <td key={c.title}>{c.title}</td>)}</tr></tfoot>
  </Grid>
);

const GradeModal = () => (
  <Dimmer>
    <Modal role="dialog" aria-labelledby="modal-title">
      <CloseButton aria-label="Close dialog"><Times size={18} /></CloseButton>
      <ModalTitle id="modal-title">Set-up Grade.</ModalTitle>
      <ModalForm>
        <FieldRow>
          <Fields>
            {formFields.map(([label, hint]) => (
              <Field key={label}>{label}<FieldInput placeholder={hint} /></Field>
            ))}
          </Fields>
          <LabeledButton type="button">
            <ButtonIcon><Plus /></ButtonIcon>
            <ButtonText>add</ButtonText>
          </LabeledButton>
        </FieldRow>
        <PrimaryButton type="button">Add</PrimaryButton>
      </ModalForm>
    </Modal>
  </Dimmer>
);

export default function App() {
  return (
    <Desktop>
      <GlobalStyle />
      <TopPanel />
      <Workspace>
        <Launcher>
          {launcherItems.map((it) => (
            <Tile key={it.name} aria-label={it.name} $tint={it.tint} $running={it.running} $focused={it.focused} $last={it.last}>
              <svg width="28" height="28" viewBox="0 0 28 28">{it.art}</svg>
            </Tile>
          ))}
        </Launcher>
        <Window>
          <BrowserChrome />
          <Viewport>
            <Sidebar>
              <Brand href="#"><Logo /><BrandName>MYSCHOOL APP</BrandName></Brand>
              <SearchItem><SidebarSearch aria-label="Search menu" placeholder="Search..." /></SearchItem>
              {sideLinks.map((l) => (
                <SideLink key={l.title} href="#">{l.title}{l.caret && <CaretRight />}</SideLink>
              ))}
            </Sidebar>
            <Main>
              <MenuButton><Bars />Menu</MenuButton>
              <Content>
                <SmallButton $w={72} $bg="#00b5ad"><Plus size={12} />add</SmallButton>
                <Heading>Showing Grade setup</Heading>
                <TableTools>
                  <LengthLabel>
                    Show
                    <SelectWrap>
                      <Select defaultValue="10"><option>10</option></Select>
                      <SelectCaret width="9" height="5" viewBox="0 0 9 5"><path d="M0 0h9L4.500 5z" fill="#333" /></SelectCaret>
                    </SelectWrap>
                    entries
                  </LengthLabel>
                  <SearchLabel>Search:<TableSearch type="search" /></SearchLabel>
                </TableTools>
                <GradeTable />
                <TableFoot>
                  <Info>Showing 1 to 4 of 4 entries</Info>
                  <Pager>
                    <PageLink href="#">Previous</PageLink>
                    <PageLink href="#" $current>1</PageLink>
                    <PageLink href="#">Next</PageLink>
                  </Pager>
                </TableFoot>
              </Content>
              <PageEnd />
            </Main>
            <GradeModal />
            <StatusBubble>127.0.0.1/schapp/main/public/show_gradesetup.php#</StatusBubble>
          </Viewport>
        </Window>
      </Workspace>
    </Desktop>
  );
}
